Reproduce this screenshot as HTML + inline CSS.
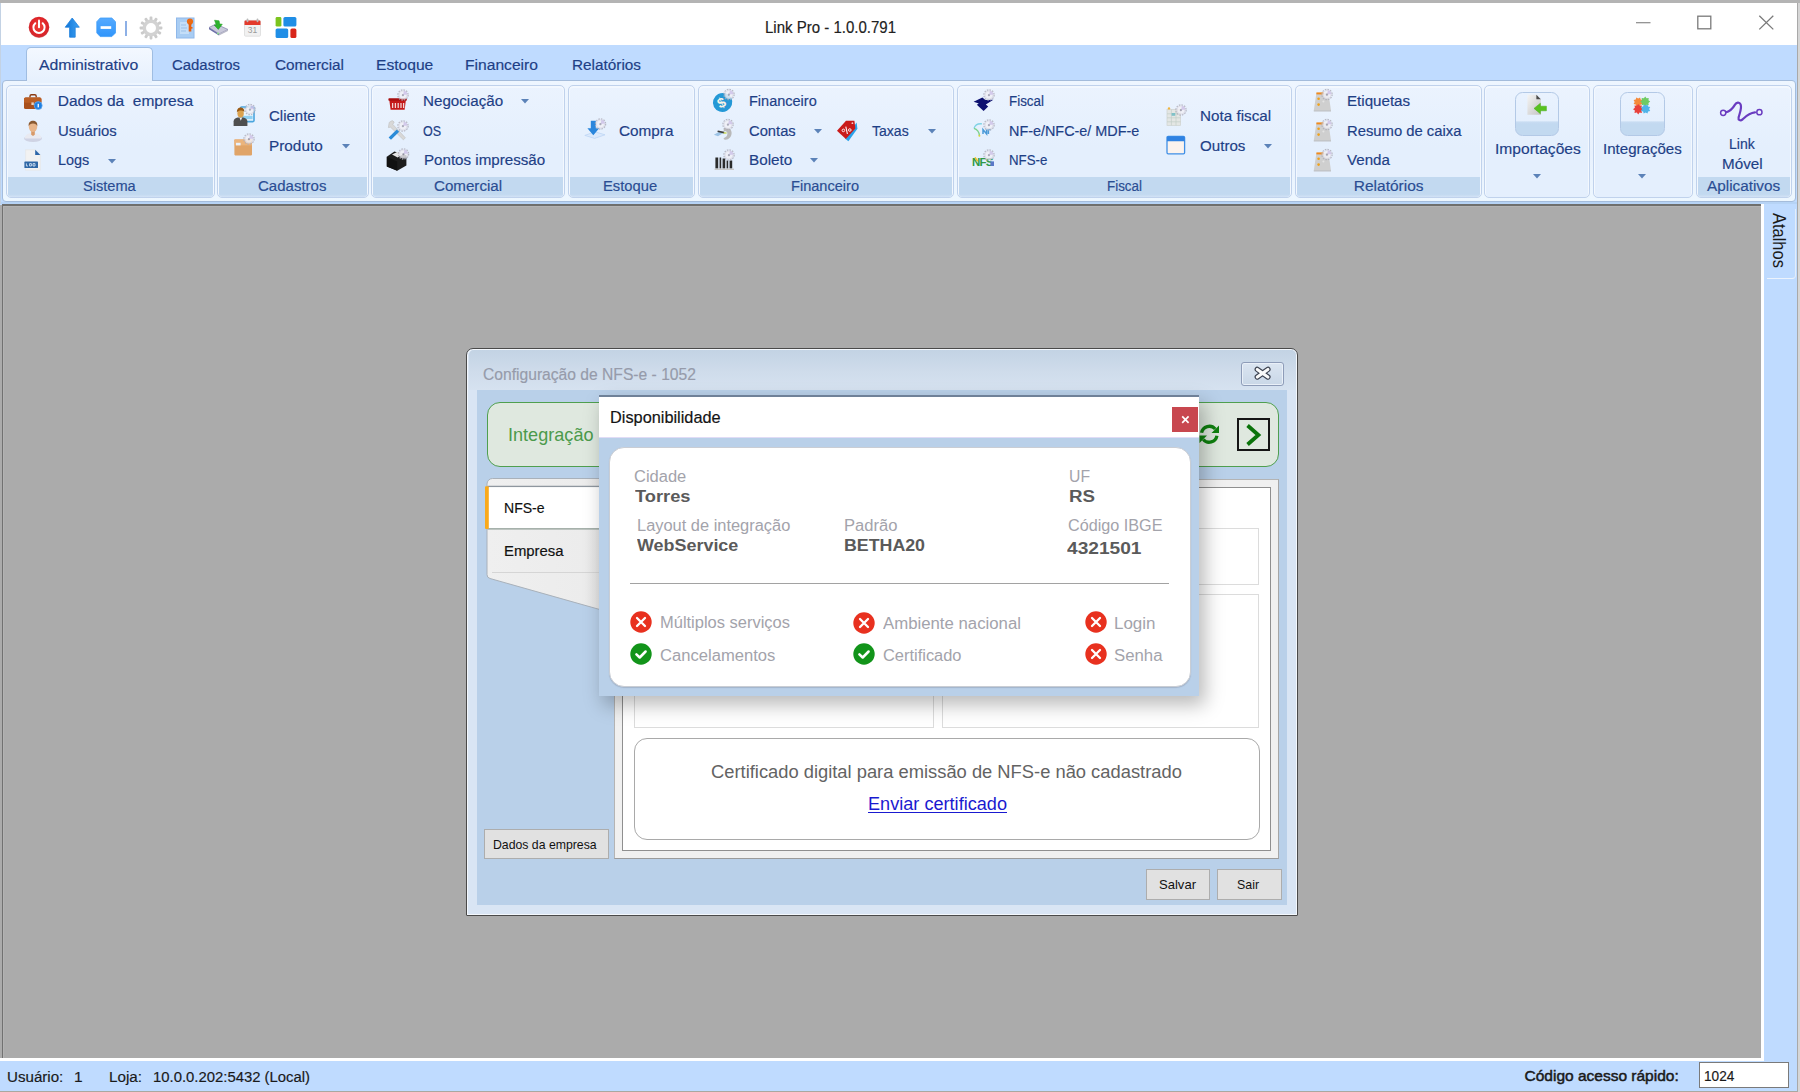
<!DOCTYPE html>
<html lang="pt-BR"><head><meta charset="utf-8"><title>Link Pro - 1.0.0.791</title>
<style>
html,body{margin:0;padding:0;}
body{width:1800px;height:1092px;overflow:hidden;position:relative;background:#ababab;
 font-family:"Liberation Sans",sans-serif;}
div,span.t,svg.i{position:absolute;box-sizing:border-box;}
span.t{white-space:pre;line-height:1;transform-origin:0 50%;}
span.s{-webkit-text-stroke:.18px currentColor;}
svg.i{overflow:visible;}
</style></head>
<body>
<div style="left:0px;top:0px;width:1800px;height:1092px;background:#ababab;"></div>
<div style="left:0px;top:0px;width:1800px;height:3px;background:#b4b4b4;"></div>
<div style="left:0px;top:3px;width:1800px;height:42px;background:#ffffff;"></div>
<div style="left:0px;top:45px;width:1800px;height:160px;background:#bfdbff;"></div>
<div style="left:0px;top:202px;width:1800px;height:2.2px;background:#b6d3f5;"></div>
<div style="left:0px;top:3px;width:1px;height:201px;background:#c3d2e4;"></div>
<div style="left:2px;top:204.3px;width:1759.5px;height:1.8px;background:#6f6f6d;"></div>
<div style="left:1.6px;top:204px;width:1.6px;height:854px;background:#717171;"></div>
<div style="left:3.2px;top:206px;width:1758px;height:1.4px;background:#b3b3b3;"></div>
<div style="left:3.2px;top:206px;width:1.2px;height:852px;background:#b3b3b3;"></div>
<div style="left:1761px;top:204px;width:3px;height:854px;background:#ffffff;"></div>
<div style="left:1764px;top:204px;width:36px;height:888px;background:#bfdbff;"></div>
<div style="left:1767.4px;top:209px;width:29px;height:70.2px;border-right:1.2px solid #e3edfa;border-bottom:1.6px solid #ecf3fc;border-bottom-right-radius:4px;"></div>
<span class="t" style="left:1787.9px;top:213px;font-size:16.5px;color:#1a1a1a;transform-origin:0 0;transform:rotate(90deg) scale(.997,1.083);">Atalhos</span>
<div style="left:0px;top:1058px;width:1764px;height:3px;background:#ffffff;"></div>
<div style="left:0px;top:1061px;width:1800px;height:31px;background:#bfdbff;"></div>
<span class="t s" style="left:6.70px;top:1068.88px;font-size:15.5px;color:#1a1a1a;transform:scaleX(0.9754);">Usuário:</span>
<span class="t s" style="left:74.00px;top:1068.88px;font-size:15.5px;color:#1a1a1a;">1</span>
<span class="t s" style="left:109.00px;top:1068.88px;font-size:15.5px;color:#1a1a1a;transform:scaleX(0.9818);">Loja:</span>
<span class="t s" style="left:153.00px;top:1068.88px;font-size:15.5px;color:#1a1a1a;transform:scaleX(0.9589);">10.0.0.202:5432 (Local)</span>
<span class="t s" style="left:1524.50px;top:1068.38px;font-size:15.5px;color:#1a1a1a;-webkit-text-stroke:.5px currentColor;">Código acesso rápido:</span>
<div style="left:1699px;top:1062.3px;width:90px;height:25.5px;background:#fff;border:1.3px solid #7a7a7a;"></div>
<span class="t s" style="left:1704.00px;top:1068.30px;font-size:15px;color:#1a1a1a;transform:scaleX(0.9079);">1024</span>
<div style="left:0px;top:1091px;width:1797px;height:1px;background:#a9a8a0;"></div>
<div style="left:1797px;top:3px;width:1.3px;height:1089px;background:#a9a9a9;"></div>
<div style="left:1798.3px;top:3px;width:1.7px;height:1089px;background:#d6d6d6;"></div>
<span class="t s" style="left:764.50px;top:18.83px;font-size:16.5px;color:#222222;transform:scaleX(0.9097);">Link Pro - 1.0.0.791</span>
<svg class="i" style="left:1630px;top:10px;" width="150" height="26" viewBox="0 0 150 26"><path d="M6 12.7h14.5" stroke="#8a8a8a" stroke-width="1.2" fill="none"/><rect x="67.8" y="6.2" width="13" height="12.6" stroke="#7a7a7a" stroke-width="1.3" fill="none"/><path d="M129.3 5.8l14 13.6M143.3 5.8l-14 13.6" stroke="#7a7a7a" stroke-width="1.3" fill="none"/></svg>
<svg class="i" style="left:28px;top:16px;" width="22" height="23" viewBox="0 0 22 23"><defs><radialGradient id="pw" cx="50%" cy="45%" r="55%"><stop offset="0" stop-color="#f0453a"/><stop offset=".72" stop-color="#df2428"/><stop offset=".9" stop-color="#d02a30"/><stop offset="1" stop-color="#e07a7e"/></radialGradient></defs><ellipse cx="11" cy="11.3" rx="10.3" ry="10.6" fill="url(#pw)"/><path d="M7.3 7.2a5.6 5.6 0 1 0 7.4 0" stroke="#fff" stroke-width="2" fill="none" stroke-linecap="round"/><path d="M11 4.6v6.6" stroke="#fff" stroke-width="2" stroke-linecap="round"/></svg>
<svg class="i" style="left:64px;top:17px;" width="17" height="22" viewBox="0 0 17 22"><defs><linearGradient id="ua" x1="0" x2="1"><stop offset="0" stop-color="#0f74d6"/><stop offset="1" stop-color="#3ea2f4"/></linearGradient></defs><path d="M8.2 1L15.3 10.2H11.2V20.2H5.6V10.2H1.2Z" fill="url(#ua)" stroke="#1d7fdc" stroke-width=".8" stroke-linejoin="round"/></svg>
<svg class="i" style="left:96px;top:17px;" width="21" height="21" viewBox="0 0 21 21"><defs><linearGradient id="mn" x1="0" y1="0" x2="0" y2="1"><stop offset="0" stop-color="#55aaff"/><stop offset="1" stop-color="#2f95fb"/></linearGradient></defs><path d="M4.2 1h11.6l3.7 3.7v11.2l-3.7 3.7H4.2L.8 15.9V4.7Z" fill="url(#mn)" stroke="#3d9cf8" stroke-width=".8"/><rect x="4.6" y="9.2" width="10.6" height="2.7" fill="#fff"/></svg>
<div style="left:125px;top:21px;width:2px;height:15px;background:#8db0e6;"></div>
<svg class="i" style="left:140px;top:17px;opacity:.78;" width="22" height="22" viewBox="0 0 22 22"><rect x="9.6" y="-.4" width="2.8" height="5" rx=".8" fill="#bdbdbd" transform="rotate(0 11 11)"/><rect x="9.6" y="-.4" width="2.8" height="5" rx=".8" fill="#bdbdbd" transform="rotate(30 11 11)"/><rect x="9.6" y="-.4" width="2.8" height="5" rx=".8" fill="#bdbdbd" transform="rotate(60 11 11)"/><rect x="9.6" y="-.4" width="2.8" height="5" rx=".8" fill="#bdbdbd" transform="rotate(90 11 11)"/><rect x="9.6" y="-.4" width="2.8" height="5" rx=".8" fill="#bdbdbd" transform="rotate(120 11 11)"/><rect x="9.6" y="-.4" width="2.8" height="5" rx=".8" fill="#bdbdbd" transform="rotate(150 11 11)"/><rect x="9.6" y="-.4" width="2.8" height="5" rx=".8" fill="#bdbdbd" transform="rotate(180 11 11)"/><rect x="9.6" y="-.4" width="2.8" height="5" rx=".8" fill="#bdbdbd" transform="rotate(210 11 11)"/><rect x="9.6" y="-.4" width="2.8" height="5" rx=".8" fill="#bdbdbd" transform="rotate(240 11 11)"/><rect x="9.6" y="-.4" width="2.8" height="5" rx=".8" fill="#bdbdbd" transform="rotate(270 11 11)"/><rect x="9.6" y="-.4" width="2.8" height="5" rx=".8" fill="#bdbdbd" transform="rotate(300 11 11)"/><rect x="9.6" y="-.4" width="2.8" height="5" rx=".8" fill="#bdbdbd" transform="rotate(330 11 11)"/><circle cx="11" cy="11" r="6.7" fill="none" stroke="#c6c6c6" stroke-width="3.4"/><circle cx="11" cy="11" r="4" fill="#fff"/></svg>
<svg class="i" style="left:176px;top:16px;" width="19" height="23" viewBox="0 0 19 23"><rect x=".5" y="2" width="17.5" height="20" fill="#a9cdf3" stroke="#8fb8ea" stroke-width="1"/><rect x="4" y="6" width="9" height="12" fill="#c4def8"/><path d="M5 9h5M5 12h6M5 15h5" stroke="#9bbfe6" stroke-width="1"/><circle cx="14" cy="5.6" r="3.1" fill="#ec6a12"/><rect x="12.7" y="7.5" width="2.6" height="8" fill="#e85f0c"/><rect x="14.5" y="11" width="2" height="1.6" fill="#e85f0c"/></svg>
<svg class="i" style="left:208px;top:19px;" width="22" height="18" viewBox="0 0 22 18"><path d="M1 8.5L8 5l12 5.5-9 4.5z" fill="#c9c9da" stroke="#8a8ab0" stroke-width=".8"/><path d="M1 8.5v1.8l10 6.2v-1.5z" fill="#6b6ea8"/><path d="M11 15v1.5l9-4.6V10.5z" fill="#b9b9c8"/><circle cx="10" cy="14.6" r="1" fill="#8be08b"/><path d="M6.5 1.2l4.6.6.6 3.2 2.6.2-4 5.2-4.2-4.4 2.2.1z" fill="#2db32d" stroke="#1d9b1d" stroke-width=".5"/></svg>
<svg class="i" style="left:244px;top:18px;" width="17" height="19" viewBox="0 0 17 19"><rect x=".5" y="2.4" width="16" height="15.8" rx="1.2" fill="#f1f1f1" stroke="#dadada" stroke-width=".8"/><path d="M.5 3.6a1.2 1.2 0 0 1 1.2-1.2h13.6a1.2 1.2 0 0 1 1.2 1.2V7H.5z" fill="#e33a2c"/><rect x="2.6" y=".6" width="1.8" height="3.6" rx=".8" fill="#b9b9b9"/><rect x="12.6" y=".6" width="1.8" height="3.6" rx=".8" fill="#b9b9b9"/><text x="8.5" y="15.3" font-size="8.5" text-anchor="middle" fill="#9a9a9a" font-family="Liberation Sans, sans-serif">31</text></svg>
<svg class="i" style="left:275px;top:16px;" width="22" height="23" viewBox="0 0 22 23"><rect x=".6" y="1" width="5.8" height="9.6" rx="1.4" fill="#7cc41e"/><rect x="8.4" y="1" width="13" height="9.6" rx="1.6" fill="#1f8ee6"/><rect x=".6" y="12.4" width="12.6" height="9.6" rx="1.6" fill="#1f8ee6"/><rect x="15.4" y="12.4" width="6" height="9.6" rx="1.6" fill="#d8261a"/></svg>
<div style="left:26px;top:47px;width:127px;height:36px;border:1px solid #9fbde2;border-bottom:none;border-radius:5px 5px 0 0;background:linear-gradient(#f3f8ff,#e6f0fd);"></div>
<div style="left:2.4px;top:80.3px;width:1794px;height:121.7px;border:1.3px solid #a4bcdb;border-radius:4px;background:linear-gradient(#eef6ff,#e8f1fd 60%,#edf7ff);"></div>
<div style="left:27px;top:80px;width:125px;height:3px;background:#e7f1fd;"></div>
<span class="t s" style="left:38.90px;top:56.58px;font-size:15.5px;color:#1e3f86;transform:scaleX(1.0191);">Administrativo</span>
<span class="t s" style="left:171.50px;top:56.58px;font-size:15.5px;color:#1e3f86;transform:scaleX(0.9626);">Cadastros</span>
<span class="t s" style="left:274.50px;top:56.58px;font-size:15.5px;color:#1e3f86;transform:scaleX(0.9890);">Comercial</span>
<span class="t s" style="left:375.70px;top:56.58px;font-size:15.5px;color:#1e3f86;transform:scaleX(1.0074);">Estoque</span>
<span class="t s" style="left:465.00px;top:56.58px;font-size:15.5px;color:#1e3f86;transform:scaleX(1.0086);">Financeiro</span>
<span class="t s" style="left:572.00px;top:56.58px;font-size:15.5px;color:#1e3f86;transform:scaleX(0.9887);">Relatórios</span>
<div style="left:6.4px;top:84.7px;width:208.2px;height:113.3px;border:1.2px solid #c0d2ec;border-radius:5px;background:linear-gradient(#ebf3fe,#e4effd 55%,#e4effd);box-shadow:inset 0 1px 0 1px #f3f8fe;"></div>
<div style="left:8.4px;top:177.2px;width:204.2px;height:19.4px;background:linear-gradient(#c2d9f0 0,#c2d9f0 86%,#d2e2f5 100%);border-radius:0 0 3px 3px;"></div>
<span class="t s" style="left:83.30px;top:177.68px;font-size:15.5px;color:#2a4d93;transform:scaleX(0.9412);">Sistema</span>
<div style="left:217.1px;top:84.7px;width:151.50000000000003px;height:113.3px;border:1.2px solid #c0d2ec;border-radius:5px;background:linear-gradient(#ebf3fe,#e4effd 55%,#e4effd);box-shadow:inset 0 1px 0 1px #f3f8fe;"></div>
<div style="left:219.1px;top:177.2px;width:147.50000000000003px;height:19.4px;background:linear-gradient(#c2d9f0 0,#c2d9f0 86%,#d2e2f5 100%);border-radius:0 0 3px 3px;"></div>
<span class="t s" style="left:257.80px;top:177.68px;font-size:15.5px;color:#2a4d93;transform:scaleX(0.9682);">Cadastros</span>
<div style="left:371.1px;top:84.7px;width:193.89999999999998px;height:113.3px;border:1.2px solid #c0d2ec;border-radius:5px;background:linear-gradient(#ebf3fe,#e4effd 55%,#e4effd);box-shadow:inset 0 1px 0 1px #f3f8fe;"></div>
<div style="left:373.1px;top:177.2px;width:189.89999999999998px;height:19.4px;background:linear-gradient(#c2d9f0 0,#c2d9f0 86%,#d2e2f5 100%);border-radius:0 0 3px 3px;"></div>
<span class="t s" style="left:433.90px;top:177.68px;font-size:15.5px;color:#2a4d93;transform:scaleX(0.9761);">Comercial</span>
<div style="left:567.5px;top:84.7px;width:127.54999999999995px;height:113.3px;border:1.2px solid #c0d2ec;border-radius:5px;background:linear-gradient(#ebf3fe,#e4effd 55%,#e4effd);box-shadow:inset 0 1px 0 1px #f3f8fe;"></div>
<div style="left:569.5px;top:177.2px;width:123.54999999999995px;height:19.4px;background:linear-gradient(#c2d9f0 0,#c2d9f0 86%,#d2e2f5 100%);border-radius:0 0 3px 3px;"></div>
<span class="t s" style="left:603.40px;top:177.68px;font-size:15.5px;color:#2a4d93;transform:scaleX(0.9511);">Estoque</span>
<div style="left:697.55px;top:84.7px;width:256.85px;height:113.3px;border:1.2px solid #c0d2ec;border-radius:5px;background:linear-gradient(#ebf3fe,#e4effd 55%,#e4effd);box-shadow:inset 0 1px 0 1px #f3f8fe;"></div>
<div style="left:699.55px;top:177.2px;width:252.85000000000002px;height:19.4px;background:linear-gradient(#c2d9f0 0,#c2d9f0 86%,#d2e2f5 100%);border-radius:0 0 3px 3px;"></div>
<span class="t s" style="left:791.00px;top:177.68px;font-size:15.5px;color:#2a4d93;transform:scaleX(0.9396);">Financeiro</span>
<div style="left:956.9px;top:84.7px;width:335.4px;height:113.3px;border:1.2px solid #c0d2ec;border-radius:5px;background:linear-gradient(#ebf3fe,#e4effd 55%,#e4effd);box-shadow:inset 0 1px 0 1px #f3f8fe;"></div>
<div style="left:958.9px;top:177.2px;width:331.4px;height:19.4px;background:linear-gradient(#c2d9f0 0,#c2d9f0 86%,#d2e2f5 100%);border-radius:0 0 3px 3px;"></div>
<span class="t s" style="left:1106.70px;top:177.68px;font-size:15.5px;color:#2a4d93;transform:scaleX(0.8646);">Fiscal</span>
<div style="left:1294.8px;top:84.7px;width:187.04999999999995px;height:113.3px;border:1.2px solid #c0d2ec;border-radius:5px;background:linear-gradient(#ebf3fe,#e4effd 55%,#e4effd);box-shadow:inset 0 1px 0 1px #f3f8fe;"></div>
<div style="left:1296.8px;top:177.2px;width:183.04999999999995px;height:19.4px;background:linear-gradient(#c2d9f0 0,#c2d9f0 86%,#d2e2f5 100%);border-radius:0 0 3px 3px;"></div>
<span class="t s" style="left:1353.80px;top:177.68px;font-size:15.5px;color:#2a4d93;">Relatórios</span>
<div style="left:1484.35px;top:84.7px;width:105.90000000000009px;height:113.3px;border:1.2px solid #c0d2ec;border-radius:5px;background:linear-gradient(#ebf3fe,#e4effd 55%,#e4effd);box-shadow:inset 0 1px 0 1px #f3f8fe;"></div>
<div style="left:1592.75px;top:84.7px;width:100.29999999999995px;height:113.3px;border:1.2px solid #c0d2ec;border-radius:5px;background:linear-gradient(#ebf3fe,#e4effd 55%,#e4effd);box-shadow:inset 0 1px 0 1px #f3f8fe;"></div>
<div style="left:1695.55px;top:84.7px;width:96.45000000000005px;height:113.3px;border:1.2px solid #c0d2ec;border-radius:5px;background:linear-gradient(#ebf3fe,#e4effd 55%,#e4effd);box-shadow:inset 0 1px 0 1px #f3f8fe;"></div>
<div style="left:1697.55px;top:177.2px;width:92.45000000000005px;height:19.4px;background:linear-gradient(#c2d9f0 0,#c2d9f0 86%,#d2e2f5 100%);border-radius:0 0 3px 3px;"></div>
<span class="t s" style="left:1707.20px;top:177.68px;font-size:15.5px;color:#2a4d93;transform:scaleX(0.9879);">Aplicativos</span>
<span class="t s" style="left:57.80px;top:92.78px;font-size:15.5px;color:#1e3f86;">Dados da  empresa</span>
<span class="t s" style="left:58.00px;top:122.58px;font-size:15.5px;color:#1e3f86;transform:scaleX(0.9597);">Usuários</span>
<span class="t s" style="left:58.00px;top:152.18px;font-size:15.5px;color:#1e3f86;transform:scaleX(0.9312);">Logs</span>
<svg class="i" style="left:108.3px;top:158.6px;" width="8" height="5" viewBox="0 0 8 5"><path d="M0 0h8l-4 4.6z" fill="#5b82b8"/></svg>
<svg class="i" style="left:23px;top:93.7px;" width="21" height="17" viewBox="0 0 21 17"><path d="M7 3.4V2.2A1.4 1.4 0 0 1 8.4.8h3.4a1.4 1.4 0 0 1 1.4 1.4v1.2" stroke="#8a3b12" stroke-width="1.4" fill="none"/><rect x="1" y="3.4" width="17.4" height="11.6" rx="1.6" fill="#a9501c"/><rect x="1" y="3.4" width="17.4" height="5.4" rx="1.6" fill="#bb5e24"/><rect x="8.4" y="8.4" width="2.4" height="2.6" fill="#e8d5c0"/><circle cx="15.2" cy="11.6" r="4" fill="#1f7fe0" stroke="#6fb1f2" stroke-width=".7"/><rect x="14.6" y="9.8" width="1.3" height="3.6" fill="#fff"/></svg>
<svg class="i" style="left:23px;top:120px;" width="20" height="22" viewBox="0 0 20 22"><ellipse cx="10" cy="18.6" rx="9" ry="3.4" fill="#cfd3e4"/><path d="M1.8 18.6c0-4 3.6-5.6 8.2-5.6s8.200 1.6 8.200 5.600z" fill="#e9eaf1"/><path d="M8.200 10.500h3.600v4.200l-1.800 1.300-1.800-1.300z" fill="#d79a6a"/><ellipse cx="10" cy="6.800" rx="4.200" ry="5.200" fill="#e8b58a"/><path d="M5.700 6.200c-.4-4 1.800-5.400 4.300-5.400s4.700 1.400 4.300 5.400c-.8-2-2-2.800-4.300-2.800s-3.500.8-4.300 2.800z" fill="#8a5a32"/></svg>
<svg class="i" style="left:24px;top:149px;" width="18" height="23" viewBox="0 0 18 23"><path d="M1.600.8h9.600l5.200 5.200v15.200H1.600z" fill="#f2f2f2" stroke="#e4e4e4" stroke-width=".6"/><path d="M11.200.8l5.200 5.200h-5.200z" fill="#2d66a8"/><rect x=".4" y="12.600" width="13.600" height="6.400" rx=".6" fill="#2f67a6"/><path d="M2.400 17v-2.600M2.400 17h1.600M5.600 14.600h1.800v2.400H5.600zM9 14.600h2v2.400H9z" stroke="#cfe0f2" stroke-width=".9" fill="none"/></svg>
<span class="t s" style="left:268.90px;top:107.58px;font-size:15.5px;color:#1e3f86;transform:scaleX(0.9678);">Cliente</span>
<span class="t s" style="left:269.00px;top:137.58px;font-size:15.5px;color:#1e3f86;transform:scaleX(0.9891);">Produto</span>
<svg class="i" style="left:342.4px;top:144.2px;" width="8" height="5" viewBox="0 0 8 5"><path d="M0 0h8l-4 4.6z" fill="#5b82b8"/></svg>
<svg class="i" style="left:233px;top:104px;" width="23" height="23" viewBox="0 0 23 23"><rect x="7.600" y="3" width="13.400" height="14.600" rx="1" fill="#eaf5fd" stroke="#4aa5de" stroke-width="1.600"/><rect x="9" y="11.800" width="10.600" height="3.400" fill="#8fd0f2"/><path d="M.6 22v-4.800c0-2 2.200-3.200 4-3.600h5.800c1.800.4 4 1.600 4 3.600V22z" fill="#4f4f4f"/><path d="M6.400 13.600l1.400 3.200 1.400-3.200z" fill="#f2f2f2"/><ellipse cx="7.600" cy="9.400" rx="3.200" ry="4" fill="#dba24e"/><path d="M3.900 8.200c0-3.400 1.800-4.600 3.900-4.600 2 0 3.500 1.200 3.500 4.400-1.200-1.200-2.200-1.600-3.600-1.600s-2.600.6-3.800 1.800z" fill="#9a5a14"/><g transform="translate(11.5 0)" opacity=".82"><circle cx="5.5" cy="5.5" r="5" fill="none" stroke="#aeadb9" stroke-width="1.5" stroke-dasharray="1.5 1.1"/><circle cx="5.5" cy="5.5" r="4.6" fill="#dcdbe5"/><circle cx="5.5" cy="5.5" r="3.4" fill="#f1f0f6"/><path d="M5.5 5.5L6.5 1.2A4.4 4.4 0 0 1 9.9 5z" fill="#cbbde6" opacity=".9"/><circle cx="5.4" cy="5.7" r="1.1" fill="#9d9bab"/></g></svg>
<svg class="i" style="left:233px;top:133px;" width="23" height="24" viewBox="0 0 23 24"><rect x="1.400" y="6.400" width="17.600" height="16" rx=".8" fill="#e0a468"/><rect x="1.400" y="6.400" width="17.600" height="6" fill="#ebb47c"/><rect x="3" y="9.800" width="4.600" height="2.600" fill="#e8f1fb"/><g transform="translate(10.5 0.5)" opacity=".82"><circle cx="5.5" cy="5.5" r="5" fill="none" stroke="#aeadb9" stroke-width="1.5" stroke-dasharray="1.5 1.1"/><circle cx="5.5" cy="5.5" r="4.6" fill="#dcdbe5"/><circle cx="5.5" cy="5.5" r="3.4" fill="#f1f0f6"/><path d="M5.5 5.5L6.5 1.2A4.4 4.4 0 0 1 9.9 5z" fill="#cbbde6" opacity=".9"/><circle cx="5.4" cy="5.7" r="1.1" fill="#9d9bab"/></g></svg>
<span class="t s" style="left:423.20px;top:92.78px;font-size:15.5px;color:#1e3f86;transform:scaleX(0.9784);">Negociação</span>
<span class="t s" style="left:423.20px;top:122.58px;font-size:15.5px;color:#1e3f86;transform:scaleX(0.8082);">OS</span>
<span class="t s" style="left:423.60px;top:152.18px;font-size:15.5px;color:#1e3f86;transform:scaleX(0.9761);">Pontos impressão</span>
<svg class="i" style="left:521.3px;top:99px;" width="8" height="5" viewBox="0 0 8 5"><path d="M0 0h8l-4 4.6z" fill="#5b82b8"/></svg>
<svg class="i" style="left:387px;top:89px;" width="23" height="23" viewBox="0 0 23 23"><path d="M2.200 10.200h16.800l-1.400 10.600H3.600z" fill="#c41818"/><rect x="1.400" y="9.200" width="18.400" height="2.600" rx=".8" fill="#a80f0f"/><path d="M5.600 14v5M8.400 14v5M11.200 14v5M14 14v5M16.600 14v5" stroke="#f3d4d4" stroke-width="1.300"/><g transform="translate(10.5 0.5)" opacity=".82"><circle cx="5.5" cy="5.5" r="5" fill="none" stroke="#aeadb9" stroke-width="1.5" stroke-dasharray="1.5 1.1"/><circle cx="5.5" cy="5.5" r="4.6" fill="#dcdbe5"/><circle cx="5.5" cy="5.5" r="3.4" fill="#f1f0f6"/><path d="M5.5 5.5L6.5 1.2A4.4 4.4 0 0 1 9.9 5z" fill="#cbbde6" opacity=".9"/><circle cx="5.4" cy="5.7" r="1.1" fill="#9d9bab"/></g></svg>
<svg class="i" style="left:387px;top:119px;" width="23" height="23" viewBox="0 0 23 23"><path d="M2.200 3.400l3-1.800 2 1.400-1.400 2.400 12.600 13.400-2 2L3.600 8.200 1.400 8.600z" fill="#d8d8d8" stroke="#bdbdbd" stroke-width=".6"/><path d="M1.600 18.400l8.200-8 2.400 2.400-8.200 8z" fill="#2a8bd8"/><g transform="translate(10.5 1.5)" opacity=".82"><circle cx="5.5" cy="5.5" r="5" fill="none" stroke="#aeadb9" stroke-width="1.5" stroke-dasharray="1.5 1.1"/><circle cx="5.5" cy="5.5" r="4.6" fill="#dcdbe5"/><circle cx="5.5" cy="5.5" r="3.4" fill="#f1f0f6"/><path d="M5.5 5.5L6.5 1.2A4.4 4.4 0 0 1 9.9 5z" fill="#cbbde6" opacity=".9"/><circle cx="5.4" cy="5.7" r="1.1" fill="#9d9bab"/></g></svg>
<svg class="i" style="left:386px;top:148px;" width="24" height="24" viewBox="0 0 24 24"><path d="M.8 8.800L8.400 3.600l12 3.600v10.400l-9.200 5.200L.8 18.400z" fill="#1c1c1c"/><path d="M6 6.400l5.600-2.600 5.600 2.400-5.600 3.400z" fill="#e6e6e6"/><path d="M.8 8.800l10.400 4.600v9.400L.8 18.400z" fill="#111"/><g transform="translate(12 0.5)" opacity=".82"><circle cx="5.5" cy="5.5" r="5" fill="none" stroke="#aeadb9" stroke-width="1.5" stroke-dasharray="1.5 1.1"/><circle cx="5.5" cy="5.5" r="4.6" fill="#dcdbe5"/><circle cx="5.5" cy="5.5" r="3.4" fill="#f1f0f6"/><path d="M5.5 5.5L6.5 1.2A4.4 4.4 0 0 1 9.9 5z" fill="#cbbde6" opacity=".9"/><circle cx="5.4" cy="5.7" r="1.1" fill="#9d9bab"/></g></svg>
<span class="t s" style="left:619.00px;top:122.58px;font-size:15.5px;color:#1e3f86;transform:scaleX(0.9868);">Compra</span>
<svg class="i" style="left:584px;top:118px;" width="23" height="23" viewBox="0 0 23 23"><path d="M.8 17.400l10.200-3.600 10 3-10.400 3.600z" fill="#dbe9fb" stroke="#b9d3f3" stroke-width=".7"/><path d="M6.800 2.800h5v7.400h3.400L9.300 17.200 3.400 10.200h3.400z" fill="#2a86dc"/><g transform="translate(11 0.5)" opacity=".82"><circle cx="5.5" cy="5.5" r="5" fill="none" stroke="#aeadb9" stroke-width="1.5" stroke-dasharray="1.5 1.1"/><circle cx="5.5" cy="5.5" r="4.6" fill="#dcdbe5"/><circle cx="5.5" cy="5.5" r="3.4" fill="#f1f0f6"/><path d="M5.5 5.5L6.5 1.2A4.4 4.4 0 0 1 9.9 5z" fill="#cbbde6" opacity=".9"/><circle cx="5.4" cy="5.7" r="1.1" fill="#9d9bab"/></g></svg>
<span class="t s" style="left:749.00px;top:92.78px;font-size:15.5px;color:#1e3f86;transform:scaleX(0.9354);">Financeiro</span>
<span class="t s" style="left:749.00px;top:122.58px;font-size:15.5px;color:#1e3f86;transform:scaleX(0.9509);">Contas</span>
<span class="t s" style="left:749.00px;top:152.18px;font-size:15.5px;color:#1e3f86;transform:scaleX(0.9851);">Boleto</span>
<span class="t s" style="left:872.30px;top:122.58px;font-size:15.5px;color:#1e3f86;transform:scaleX(0.9063);">Taxas</span>
<svg class="i" style="left:814.2px;top:128.6px;" width="8" height="5" viewBox="0 0 8 5"><path d="M0 0h8l-4 4.6z" fill="#5b82b8"/></svg>
<svg class="i" style="left:810.4px;top:158.4px;" width="8" height="5" viewBox="0 0 8 5"><path d="M0 0h8l-4 4.6z" fill="#5b82b8"/></svg>
<svg class="i" style="left:928.2px;top:128.6px;" width="8" height="5" viewBox="0 0 8 5"><path d="M0 0h8l-4 4.6z" fill="#5b82b8"/></svg>
<svg class="i" style="left:712px;top:89px;" width="24" height="24" viewBox="0 0 24 24"><ellipse cx="10.600" cy="13.400" rx="9.800" ry="9.400" fill="#2498d6" transform="rotate(-28 10.600 13.400)"/><text x="9.600" y="18.600" font-size="14" font-weight="bold" fill="#f7f3e6" text-anchor="middle" font-family="Liberation Sans, sans-serif" transform="rotate(-25 9.600 14)">$</text><g transform="translate(11.5 0)" opacity=".82"><circle cx="5.5" cy="5.5" r="5" fill="none" stroke="#aeadb9" stroke-width="1.5" stroke-dasharray="1.5 1.1"/><circle cx="5.5" cy="5.5" r="4.6" fill="#dcdbe5"/><circle cx="5.5" cy="5.5" r="3.4" fill="#f1f0f6"/><path d="M5.5 5.5L6.5 1.2A4.4 4.4 0 0 1 9.9 5z" fill="#cbbde6" opacity=".9"/><circle cx="5.4" cy="5.7" r="1.1" fill="#9d9bab"/></g></svg>
<svg class="i" style="left:713px;top:119px;" width="23" height="23" viewBox="0 0 23 23"><path d="M10.600 9.400c4-2 8.400.4 8 5.200-.3 3.400-2.600 6-6 6.200-2 .1-2.600-1.400-1.200-2 2-.8 3-2 3-4.200 0-2-1.600-3-3.600-2.400z" fill="#b9b9b9"/><path d="M.8 15.800l6-3.200 4.200 1-6 3.600z" fill="#9cc3e6"/><path d="M4.800 11.400l6.600 1.400-.3 1.600-6.700-1.400z" fill="#3c3c3c"/><rect x="10.600" y="13.400" width="3" height="1.200" fill="#c8d838"/><g transform="translate(9.5 0)" opacity=".82"><circle cx="5.5" cy="5.5" r="5" fill="none" stroke="#aeadb9" stroke-width="1.5" stroke-dasharray="1.5 1.1"/><circle cx="5.5" cy="5.5" r="4.6" fill="#dcdbe5"/><circle cx="5.5" cy="5.5" r="3.4" fill="#f1f0f6"/><path d="M5.5 5.5L6.5 1.2A4.4 4.4 0 0 1 9.9 5z" fill="#cbbde6" opacity=".9"/><circle cx="5.4" cy="5.7" r="1.1" fill="#9d9bab"/></g></svg>
<svg class="i" style="left:714px;top:149px;" width="22" height="22" viewBox="0 0 22 22"><path d="M1.400 8.600h2.800v11H1.400zM5.600 8.600h1.600v11H5.600zM12.600 11.600h1.600v8h-1.600zM15.600 11.600h2.600v8h-2.600zM8.600 9.600h2.600v10H8.600z" fill="#2b2b2b"/><rect x=".6" y="19.600" width="19.400" height="1.400" fill="#c9c9c9"/><g transform="translate(9.5 0.5)" opacity=".82"><circle cx="5.5" cy="5.5" r="5" fill="none" stroke="#aeadb9" stroke-width="1.5" stroke-dasharray="1.5 1.1"/><circle cx="5.5" cy="5.5" r="4.6" fill="#dcdbe5"/><circle cx="5.5" cy="5.5" r="3.4" fill="#f1f0f6"/><path d="M5.5 5.5L6.5 1.2A4.4 4.4 0 0 1 9.9 5z" fill="#cbbde6" opacity=".9"/><circle cx="5.4" cy="5.7" r="1.1" fill="#9d9bab"/></g></svg>
<svg class="i" style="left:836px;top:119px;" width="24" height="24" viewBox="0 0 24 24"><path d="M9.200 19.800l3.200 2.400 9-12.400-.8-6.200z" fill="#2aa2ea"/><path d="M10 1.800h8.400l1 7.600L9.800 20 1 11.800z" fill="#c91a1a"/><circle cx="16.400" cy="4.200" r=".9" fill="#f3c9c9"/><path d="M9.800 7.600l1.600 7.400" stroke="#fff" stroke-width="1.100"/><circle cx="7.400" cy="11.400" r="1.300" fill="none" stroke="#fff" stroke-width=".9"/><circle cx="13.800" cy="11" r="1.300" fill="none" stroke="#fff" stroke-width=".9"/></svg>
<span class="t s" style="left:1009.00px;top:92.78px;font-size:15.5px;color:#1e3f86;transform:scaleX(0.8646);">Fiscal</span>
<span class="t s" style="left:1009.00px;top:122.58px;font-size:15.5px;color:#1e3f86;transform:scaleX(0.9284);">NF-e/NFC-e/ MDF-e</span>
<span class="t s" style="left:1009.00px;top:152.18px;font-size:15.5px;color:#1e3f86;transform:scaleX(0.8552);">NFS-e</span>
<span class="t s" style="left:1199.80px;top:107.58px;font-size:15.5px;color:#1e3f86;transform:scaleX(0.9825);">Nota fiscal</span>
<span class="t s" style="left:1199.80px;top:137.58px;font-size:15.5px;color:#1e3f86;transform:scaleX(0.9761);">Outros</span>
<svg class="i" style="left:1264px;top:144.2px;" width="8" height="5" viewBox="0 0 8 5"><path d="M0 0h8l-4 4.6z" fill="#5b82b8"/></svg>
<svg class="i" style="left:972px;top:89px;" width="24" height="23" viewBox="0 0 24 23"><path d="M1.600 12.800l8.800-4.200 3 2.400 8-.2-7.600 4.600 2.400 2-4.600 4.600-6.800-6.200 2-1.400z" fill="#0d1170"/><g transform="translate(11.5 0.5)" opacity=".82"><circle cx="5.5" cy="5.5" r="5" fill="none" stroke="#aeadb9" stroke-width="1.5" stroke-dasharray="1.5 1.1"/><circle cx="5.5" cy="5.5" r="4.6" fill="#dcdbe5"/><circle cx="5.5" cy="5.5" r="3.4" fill="#f1f0f6"/><path d="M5.5 5.5L6.5 1.2A4.4 4.4 0 0 1 9.9 5z" fill="#cbbde6" opacity=".9"/><circle cx="5.4" cy="5.7" r="1.1" fill="#9d9bab"/></g></svg>
<svg class="i" style="left:972px;top:119px;" width="24" height="23" viewBox="0 0 24 23"><path d="M2 9.400c1-3.400 4-5 8-4.600" stroke="#7fd3e6" stroke-width="1.300" fill="none"/><path d="M2 9.400c3.400 1 5 3.400 5.400 7" stroke="#7bd08c" stroke-width="1.300" fill="none"/><circle cx="7.400" cy="16.800" r="1" fill="#d8d838"/><path d="M11 15v-4.400l3.600 4.400v-4.400M16.400 15v-4.400h2.400" stroke="#4a9ad8" stroke-width="1.500" fill="none"/><g transform="translate(11.5 0.5)" opacity=".82"><circle cx="5.5" cy="5.5" r="5" fill="none" stroke="#aeadb9" stroke-width="1.5" stroke-dasharray="1.5 1.1"/><circle cx="5.5" cy="5.5" r="4.6" fill="#dcdbe5"/><circle cx="5.5" cy="5.5" r="3.4" fill="#f1f0f6"/><path d="M5.5 5.5L6.5 1.2A4.4 4.4 0 0 1 9.9 5z" fill="#cbbde6" opacity=".9"/><circle cx="5.4" cy="5.7" r="1.1" fill="#9d9bab"/></g></svg>
<svg class="i" style="left:972px;top:149px;" width="24" height="22" viewBox="0 0 24 22"><text x="0" y="17" font-size="11.500" font-weight="bold" fill="#2e9a4a" font-family="Liberation Sans, sans-serif" letter-spacing="-.8">NFS</text><path d="M3 8.400l2.600 4" stroke="#f2c21a" stroke-width="1.600"/><rect x="18.400" y="12.400" width="3.600" height="4.600" fill="#5a78c8"/><g transform="translate(11.5 0.5)" opacity=".82"><circle cx="5.5" cy="5.5" r="5" fill="none" stroke="#aeadb9" stroke-width="1.5" stroke-dasharray="1.5 1.1"/><circle cx="5.5" cy="5.5" r="4.6" fill="#dcdbe5"/><circle cx="5.5" cy="5.5" r="3.4" fill="#f1f0f6"/><path d="M5.5 5.5L6.5 1.2A4.4 4.4 0 0 1 9.9 5z" fill="#cbbde6" opacity=".9"/><circle cx="5.4" cy="5.7" r="1.1" fill="#9d9bab"/></g></svg>
<svg class="i" style="left:1166px;top:104px;" width="22" height="23" viewBox="0 0 22 23"><rect x="1" y="5.400" width="13.600" height="16" fill="#e4e6e4" stroke="#cfd2cf" stroke-width=".7"/><path d="M1 9.800h13.600M1 13.800h13.600M1 17.800h13.600M5.400 5.400v16M10 5.400v16" stroke="#c3cfc8" stroke-width=".7"/><circle cx="3" cy="4.400" r="1.200" fill="#f0b43c"/><rect x="5.600" y="9" width="3.600" height="2.800" fill="#7fc1c8"/><g transform="translate(9.5 0.5)" opacity=".82"><circle cx="5.5" cy="5.5" r="5" fill="none" stroke="#aeadb9" stroke-width="1.5" stroke-dasharray="1.5 1.1"/><circle cx="5.5" cy="5.5" r="4.6" fill="#dcdbe5"/><circle cx="5.5" cy="5.5" r="3.4" fill="#f1f0f6"/><path d="M5.5 5.5L6.5 1.2A4.4 4.4 0 0 1 9.9 5z" fill="#cbbde6" opacity=".9"/><circle cx="5.4" cy="5.7" r="1.1" fill="#9d9bab"/></g></svg>
<svg class="i" style="left:1166px;top:135px;" width="20" height="20" viewBox="0 0 20 20"><rect x="1" y="1.400" width="17.600" height="17.400" rx="1.200" fill="#fbf3ee" stroke="#3f8fe6" stroke-width="1.300"/><path d="M1 2.600a1.200 1.200 0 0 1 1.200-1.200h15.200a1.200 1.200 0 0 1 1.200 1.200v3.600H1z" fill="#2f82e2"/></svg>
<span class="t s" style="left:1347.20px;top:92.78px;font-size:15.5px;color:#1e3f86;transform:scaleX(0.9763);">Etiquetas</span>
<span class="t s" style="left:1347.20px;top:122.58px;font-size:15.5px;color:#1e3f86;transform:scaleX(0.9553);">Resumo de caixa</span>
<span class="t s" style="left:1347.20px;top:152.18px;font-size:15.5px;color:#1e3f86;transform:scaleX(0.9757);">Venda</span>
<svg class="i" style="left:1313px;top:89px;" width="22" height="23" viewBox="0 0 22 23"><path d="M3.400 4h12l2.600 17.400H.8z" fill="#cfcfcf"/><path d="M.8 21.400h17.200v1H.8z" fill="#b5b5b5"/><rect x="3.400" y="3.400" width="7.600" height="2" fill="#f08a1c"/><circle cx="5.600" cy="9.800" r="1.300" fill="#f0a21c"/><circle cx="5.600" cy="15.600" r="1.300" fill="#f0a21c"/><circle cx="10.400" cy="12.600" r="1" fill="#e4e4e4"/><g transform="translate(8.5 0)" opacity=".82"><circle cx="5.5" cy="5.5" r="5" fill="none" stroke="#aeadb9" stroke-width="1.5" stroke-dasharray="1.5 1.1"/><circle cx="5.5" cy="5.5" r="4.6" fill="#dcdbe5"/><circle cx="5.5" cy="5.5" r="3.4" fill="#f1f0f6"/><path d="M5.5 5.5L6.5 1.2A4.4 4.4 0 0 1 9.9 5z" fill="#cbbde6" opacity=".9"/><circle cx="5.4" cy="5.7" r="1.1" fill="#9d9bab"/></g></svg>
<svg class="i" style="left:1313px;top:119px;" width="22" height="23" viewBox="0 0 22 23"><path d="M3.400 4h12l2.600 17.400H.8z" fill="#cfcfcf"/><path d="M.8 21.400h17.200v1H.8z" fill="#b5b5b5"/><rect x="3.400" y="3.400" width="7.600" height="2" fill="#f08a1c"/><circle cx="5.600" cy="9.800" r="1.300" fill="#f0a21c"/><circle cx="5.600" cy="15.600" r="1.300" fill="#f0a21c"/><circle cx="10.400" cy="12.600" r="1" fill="#e4e4e4"/><g transform="translate(8.5 0)" opacity=".82"><circle cx="5.5" cy="5.5" r="5" fill="none" stroke="#aeadb9" stroke-width="1.5" stroke-dasharray="1.5 1.1"/><circle cx="5.5" cy="5.5" r="4.6" fill="#dcdbe5"/><circle cx="5.5" cy="5.5" r="3.4" fill="#f1f0f6"/><path d="M5.5 5.5L6.5 1.2A4.4 4.4 0 0 1 9.9 5z" fill="#cbbde6" opacity=".9"/><circle cx="5.4" cy="5.7" r="1.1" fill="#9d9bab"/></g></svg>
<svg class="i" style="left:1313px;top:149px;" width="22" height="23" viewBox="0 0 22 23"><path d="M3.400 4h12l2.600 17.400H.8z" fill="#cfcfcf"/><path d="M.8 21.400h17.200v1H.8z" fill="#b5b5b5"/><rect x="3.400" y="3.400" width="7.600" height="2" fill="#f08a1c"/><circle cx="5.600" cy="9.800" r="1.300" fill="#f0a21c"/><circle cx="5.600" cy="15.600" r="1.300" fill="#f0a21c"/><circle cx="10.400" cy="12.600" r="1" fill="#e4e4e4"/><g transform="translate(8.5 0)" opacity=".82"><circle cx="5.5" cy="5.5" r="5" fill="none" stroke="#aeadb9" stroke-width="1.5" stroke-dasharray="1.5 1.1"/><circle cx="5.5" cy="5.5" r="4.6" fill="#dcdbe5"/><circle cx="5.5" cy="5.5" r="3.4" fill="#f1f0f6"/><path d="M5.5 5.5L6.5 1.2A4.4 4.4 0 0 1 9.9 5z" fill="#cbbde6" opacity=".9"/><circle cx="5.4" cy="5.7" r="1.1" fill="#9d9bab"/></g></svg>
<div style="left:1514.6px;top:91.5px;width:44.6px;height:44.3px;border:1.2px solid #b3c9e6;border-radius:7.5px;overflow:hidden;background:linear-gradient(#e9f2fe 0,#e4effd 66%,#c8dcf2 69%,#c2d9f0 74%,#c2d9f0 100%);"></div>
<div style="left:1620.2px;top:91.5px;width:44.6px;height:44.3px;border:1.2px solid #b3c9e6;border-radius:7.5px;overflow:hidden;background:linear-gradient(#e9f2fe 0,#e4effd 66%,#c8dcf2 69%,#c2d9f0 74%,#c2d9f0 100%);"></div>
<span class="t s" style="left:1494.60px;top:140.88px;font-size:15.5px;color:#1e3f86;transform:scaleX(1.0060);">Importações</span>
<span class="t s" style="left:1603.00px;top:140.88px;font-size:15.5px;color:#1e3f86;transform:scaleX(0.9729);">Integrações</span>
<svg class="i" style="left:1533.2px;top:173.6px;" width="8" height="5" viewBox="0 0 8 5"><path d="M0 0h8l-4 4.6z" fill="#5b82b8"/></svg>
<svg class="i" style="left:1638.4px;top:173.6px;" width="8" height="5" viewBox="0 0 8 5"><path d="M0 0h8l-4 4.6z" fill="#5b82b8"/></svg>
<svg class="i" style="left:1525.6px;top:94.4px;" width="22" height="24" viewBox="0 0 22 24"><defs><linearGradient id="pg" x1="0" y1="0" x2="1" y2="1"><stop offset="0" stop-color="#f4f4f4"/><stop offset="1" stop-color="#c4c4c4"/></linearGradient></defs><path d="M1.400.8h9l4.400 4.400v15.600H1.400z" fill="url(#pg)"/><path d="M10.400.8l4.400 4.400h-4.400z" fill="#4a4a4a"/><path d="M8 14.400l6.400-5.200v3h6v4.600h-6v3z" fill="#58c220" stroke="#46a814" stroke-width=".5"/></svg>
<svg class="i" style="left:1632.6px;top:97px;" width="18" height="18" viewBox="0 0 18 18"><path d="M9.82 6.91L7.67 7.47L7.11 9.62L5.20 8.50L3.29 9.62L2.73 7.47L0.58 6.91L1.70 5.00L0.58 3.09L2.73 2.53L3.29 0.38L5.20 1.50L7.11 0.38L7.67 2.53L9.82 3.09L8.70 5.00Z" fill="#f58a3a"/><path d="M17.20 4.60L15.43 5.94L15.74 8.14L13.54 7.83L12.20 9.60L10.86 7.83L8.66 8.14L8.97 5.94L7.20 4.60L8.97 3.26L8.66 1.06L10.86 1.37L12.20 -0.40L13.54 1.37L15.74 1.06L15.43 3.26Z" fill="#6ecb63"/><path d="M10.40 12.20L8.53 13.58L8.88 15.88L6.58 15.53L5.20 17.40L3.82 15.53L1.52 15.88L1.87 13.58L0.00 12.20L1.87 10.82L1.52 8.52L3.82 8.87L5.20 7.00L6.58 8.87L8.88 8.52L8.53 10.82Z" fill="#e8413c"/><path d="M17.22 13.91L15.07 14.47L14.51 16.62L12.60 15.50L10.69 16.62L10.13 14.47L7.98 13.91L9.10 12.00L7.98 10.09L10.13 9.53L10.69 7.38L12.60 8.50L14.51 7.38L15.07 9.53L17.22 10.09L16.10 12.00Z" fill="#4fb3e8"/></svg>
<span class="t s" style="left:1728.90px;top:136.18px;font-size:15.5px;color:#1e3f86;transform:scaleX(0.9073);">Link</span>
<span class="t s" style="left:1722.10px;top:156.48px;font-size:15.5px;color:#1e3f86;transform:scaleX(0.9819);">Móvel</span>
<svg class="i" style="left:1719px;top:99px;" width="46" height="25" viewBox="0 0 46 25"><path d="M6.600 13.400c5-1 7.400-4.400 9.400-7.800 1.400-2.400 4.400-3 5.600-.2 1.600 3.800-1.200 9.600-2 13-.6 2.600 1.800 4 4 2 3.400-3.200 6.400-6.400 12.400-7" stroke="#6a3cc0" stroke-width="2.200" fill="none" stroke-linecap="round"/><circle cx="4.200" cy="13.800" r="2.600" fill="#eef4fe" stroke="#6a3cc0" stroke-width="1.500"/><circle cx="40.400" cy="13.200" r="2.600" fill="#eef4fe" stroke="#6a3cc0" stroke-width="1.500"/></svg>
<div style="left:466px;top:347.9px;width:832.3px;height:568.6px;border:1.5px solid #4a4a4a;border-radius:7px 7px 1px 1px;background:#d9e5f4;box-shadow:inset 0 0 0 1px #f4f8fd;"></div>
<div style="left:468.5px;top:350.4px;width:827.3px;height:40px;border-radius:5px 5px 0 0;background:linear-gradient(#c3d3e4,#cfdceb 55%,#d6e2f0);"></div>
<span class="t s" style="left:483.00px;top:366.75px;font-size:16.6px;color:#969baa;transform:scaleX(0.9422);">Configuração de NFS-e - 1052</span>
<div style="left:1241.2px;top:361.8px;width:43.2px;height:24.2px;border:1.4px solid #8e9cb8;border-radius:3px;background:linear-gradient(#dbe5f1,#c9d7e7);box-shadow:inset 0 0 0 1px #e9f0f8;"></div>
<svg class="i" style="left:1253px;top:365px;" width="19" height="16" viewBox="0 0 19 16"><path d="M4.300 4.400l10.600 7.600M14.900 4.400l-10.600 7.600" stroke="#3c4250" stroke-width="5.400" stroke-linecap="round"/><path d="M4.300 4.400l10.600 7.600M14.900 4.400l-10.600 7.600" stroke="#fafafa" stroke-width="3.100" stroke-linecap="round"/></svg>
<div style="left:477px;top:390px;width:810.2px;height:515px;background:#b9d0e9;"></div>
<div style="left:486.5px;top:402.3px;width:792.3px;height:64.6px;border:1.5px solid #4f9f4f;border-radius:13px;background:#dfe8df;"></div>
<span class="t" style="left:508.00px;top:424.52px;font-size:19px;color:#4b9a4b;transform:scaleX(0.9523);">Integração</span>
<svg class="i" style="left:1197.5px;top:423.3px;" width="22.5" height="22.5" viewBox="0 0 24 24"><path d="M3.800 10.400a8.400 8.400 0 0 1 14.600-4" stroke="#0f810f" stroke-width="3.500" fill="none"/><path d="M22.400 2.600v8h-8z" fill="#0f810f"/><path d="M20.200 13.600a8.400 8.400 0 0 1-14.600 4" stroke="#0f810f" stroke-width="3.500" fill="none"/><path d="M1.600 21.400v-8h8z" fill="#0f810f"/></svg>
<div style="left:1237px;top:418.2px;width:33px;height:32.8px;border:2px solid #151515;background:#dfe8df;"></div>
<svg class="i" style="left:1243px;top:423px;" width="22" height="24" viewBox="0 0 22 24"><path d="M6 3.800l9.400 8.200-9.400 8.200" stroke="#0a730a" stroke-width="3.800" fill="none" stroke-linecap="square" stroke-linejoin="miter"/></svg>
<svg class="i" style="left:484px;top:476px;" width="116" height="136" viewBox="0 0 116 136"><defs><linearGradient id="tl" x1="0" x2="1"><stop offset="0" stop-color="#efefef"/><stop offset=".86" stop-color="#ececec"/><stop offset="1" stop-color="#e4e4e4"/></linearGradient></defs><path d="M3 8a5.500 5.500 0 0 1 5.500-5.500H116V133.600L6 102.500a4 4 0 0 1-3-4z" fill="url(#tl)" stroke="#a9b1ba" stroke-width="1"/><path d="M3.500 10.500H116" stroke="#8f979f" stroke-width="1.400"/><rect x="3.500" y="11.200" width="112.500" height="41.300" fill="#ffffff"/><path d="M3.500 52.800H116" stroke="#8b9a92" stroke-width="1.300"/><path d="M8 96.500H116" stroke="#d5d5d5" stroke-width="1.200"/><rect x="1" y="10.300" width="3.800" height="42.600" rx="1" fill="#f9a91a"/></svg>
<span class="t s" style="left:504.00px;top:499.88px;font-size:15.5px;color:#111111;transform:scaleX(0.9066);">NFS-e</span>
<span class="t s" style="left:504.00px;top:543.18px;font-size:15.5px;color:#111111;transform:scaleX(0.9609);">Empresa</span>
<div style="left:613.5px;top:478.5px;width:665.5px;height:380.5px;background:#f0f0f0;border:1px solid #b4b4b4;border-bottom-color:#9b9b9b;border-right-color:#a6a6a6;"></div>
<div style="left:621.5px;top:486.5px;width:649.5px;height:364.5px;background:#ffffff;border:1.3px solid #8f8f8f;"></div>
<div style="left:633.5px;top:528px;width:625px;height:56.5px;border:1px solid #dcdcdc;background:#fff;"></div>
<div style="left:633.5px;top:594px;width:300px;height:133.5px;border:1px solid #dcdcdc;background:#fff;"></div>
<div style="left:942px;top:594px;width:316.5px;height:133.5px;border:1px solid #dcdcdc;background:#fff;"></div>
<div style="left:633.5px;top:737.9px;width:626.5px;height:102px;border:1.3px solid #a9a9a9;border-radius:13px;background:#fff;"></div>
<span class="t" style="left:710.60px;top:764.49px;font-size:17.5px;color:#636363;transform:scaleX(1.0477);">Certificado digital para emissão de NFS-e não cadastrado</span>
<span class="t" style="left:868.00px;top:796.39px;font-size:17.5px;color:#1a1ad0;transform:scaleX(1.0355);text-decoration:underline;text-decoration-thickness:1.4px;text-underline-offset:2px;">Enviar certificado</span>
<div style="left:483.5px;top:828.5px;width:125.5px;height:30.0px;background:#e1e1e1;border:1px solid #adadad;"></div>
<span class="t" style="left:493.40px;top:837.60px;font-size:13px;color:#111111;transform:scaleX(0.9432);">Dados da empresa</span>
<div style="left:1145.5px;top:869px;width:64.5px;height:31px;background:#e1e1e1;border:1px solid #adadad;"></div>
<span class="t" style="left:1158.50px;top:878.00px;font-size:13px;color:#111111;transform:scaleX(1.0041);">Salvar</span>
<div style="left:1217px;top:869px;width:64.5px;height:31px;background:#e1e1e1;border:1px solid #adadad;"></div>
<span class="t" style="left:1237.00px;top:878.00px;font-size:13px;color:#111111;transform:scaleX(0.9517);">Sair</span>
<div style="left:598.5px;top:396px;width:600.5px;height:300px;background:transparent;box-shadow:5px 8px 18px 1px rgba(0,0,0,.27);"></div>
<div style="left:598.5px;top:395px;width:600.5px;height:301px;background:#b9d0e9;border-top:2px solid #6f8198;"></div>
<div style="left:598.5px;top:397px;width:600.5px;height:40.8px;background:#ffffff;border-bottom:1px solid #e0dcf6;"></div>
<span class="t s" style="left:609.80px;top:408.62px;font-size:16.4px;color:#141414;transform:scaleX(0.9954);">Disponibilidade</span>
<div style="left:1172px;top:406.5px;width:26px;height:25.5px;background:#c8474f;"></div>
<svg class="i" style="left:1179.5px;top:413.5px;" width="11" height="11" viewBox="0 0 11 11"><path d="M2.200 2.400l6.400 6.400M8.600 2.400l-6.400 6.400" stroke="#fff" stroke-width="1.700"/></svg>
<div style="left:608.6px;top:446.5px;width:582px;height:240.5px;background:#fff;border:1px solid #c9cdd4;border-radius:15px;box-shadow:0 1px 1px rgba(120,130,150,.35);"></div>
<span class="t" style="left:634.20px;top:469.36px;font-size:16px;color:#a3a3ab;transform:scaleX(1.0315);">Cidade</span>
<span class="t" style="left:634.50px;top:489.26px;font-size:16px;color:#5a5a5a;font-weight:bold;transform:scaleX(1.1418);">Torres</span>
<span class="t" style="left:1068.50px;top:469.36px;font-size:16px;color:#a3a3ab;transform:scaleX(0.9846);">UF</span>
<span class="t" style="left:1068.50px;top:489.26px;font-size:16px;color:#5a5a5a;font-weight:bold;transform:scaleX(1.1698);">RS</span>
<span class="t" style="left:636.70px;top:518.46px;font-size:16px;color:#a3a3ab;transform:scaleX(1.0258);">Layout de integração</span>
<span class="t" style="left:637.00px;top:537.96px;font-size:16px;color:#5a5a5a;font-weight:bold;transform:scaleX(1.1203);">WebService</span>
<span class="t" style="left:844.00px;top:518.46px;font-size:16px;color:#a3a3ab;transform:scaleX(1.0369);">Padrão</span>
<span class="t" style="left:844.00px;top:537.96px;font-size:16px;color:#5a5a5a;font-weight:bold;transform:scaleX(1.1110);">BETHA20</span>
<span class="t" style="left:1068.00px;top:518.46px;font-size:16px;color:#a3a3ab;transform:scaleX(1.0120);">Código IBGE</span>
<span class="t" style="left:1067.00px;top:540.01px;font-size:17px;color:#5a5a5a;font-weight:bold;transform:scaleX(1.1259);">4321501</span>
<div style="left:630px;top:583.2px;width:538.5px;height:1.2px;background:#a2a2a2;"></div>
<svg class="i" style="left:629.8px;top:610.7px;" width="22" height="22" viewBox="0 0 22 22"><circle cx="11" cy="11" r="10.700" fill="#e8311f"/><path d="M7 7l8 8M15 7l-8 8" stroke="#fff" stroke-width="2.300" stroke-linecap="round"/></svg>
<span class="t" style="left:660.00px;top:615.36px;font-size:16px;color:#a3a3ab;transform:scaleX(1.0296);">Múltiplos serviços</span>
<svg class="i" style="left:629.8px;top:643.2px;" width="22" height="22" viewBox="0 0 22 22"><circle cx="11" cy="11" r="10.700" fill="#12941a"/><path d="M6.400 11.300l3.300 3.200 5.900-6" stroke="#fff" stroke-width="2.500" fill="none" stroke-linecap="round" stroke-linejoin="round"/></svg>
<span class="t" style="left:660.00px;top:647.56px;font-size:16px;color:#a3a3ab;transform:scaleX(1.0371);">Cancelamentos</span>
<svg class="i" style="left:852.7px;top:611.8px;" width="22" height="22" viewBox="0 0 22 22"><circle cx="11" cy="11" r="10.700" fill="#e8311f"/><path d="M7 7l8 8M15 7l-8 8" stroke="#fff" stroke-width="2.300" stroke-linecap="round"/></svg>
<span class="t" style="left:882.50px;top:616.36px;font-size:16px;color:#a3a3ab;transform:scaleX(1.0483);">Ambiente nacional</span>
<svg class="i" style="left:852.7px;top:643.2px;" width="22" height="22" viewBox="0 0 22 22"><circle cx="11" cy="11" r="10.700" fill="#12941a"/><path d="M6.400 11.300l3.300 3.200 5.900-6" stroke="#fff" stroke-width="2.500" fill="none" stroke-linecap="round" stroke-linejoin="round"/></svg>
<span class="t" style="left:882.50px;top:647.56px;font-size:16px;color:#a3a3ab;transform:scaleX(1.0265);">Certificado</span>
<svg class="i" style="left:1084.5px;top:611px;" width="22" height="22" viewBox="0 0 22 22"><circle cx="11" cy="11" r="10.700" fill="#e8311f"/><path d="M7 7l8 8M15 7l-8 8" stroke="#fff" stroke-width="2.300" stroke-linecap="round"/></svg>
<span class="t" style="left:1114.00px;top:616.36px;font-size:16px;color:#a3a3ab;transform:scaleX(1.0601);">Login</span>
<svg class="i" style="left:1084.5px;top:643.2px;" width="22" height="22" viewBox="0 0 22 22"><circle cx="11" cy="11" r="10.700" fill="#e8311f"/><path d="M7 7l8 8M15 7l-8 8" stroke="#fff" stroke-width="2.300" stroke-linecap="round"/></svg>
<span class="t" style="left:1114.00px;top:647.56px;font-size:16px;color:#a3a3ab;transform:scaleX(1.0483);">Senha</span>
</body></html>
